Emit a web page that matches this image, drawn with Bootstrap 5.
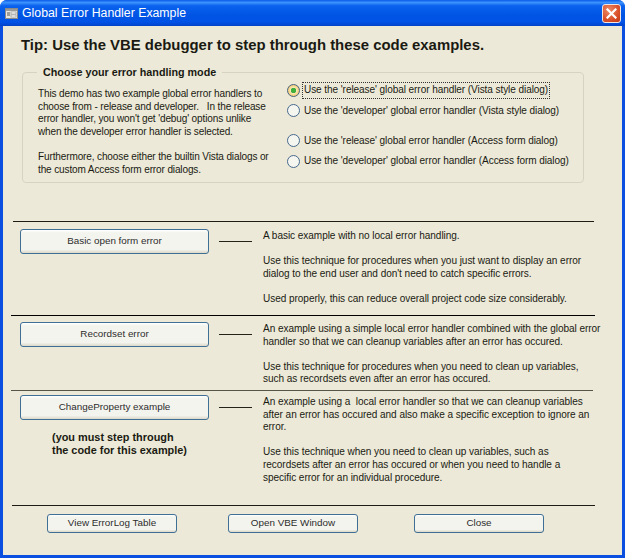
<!DOCTYPE html>
<html lang="en">

<head>
    <meta charset="UTF-8" />
    <title>Global Error Handler Example</title>
    <link rel="stylesheet" href="https://cdn.jsdelivr.net/npm/bootstrap@5.3.0/dist/css/bootstrap.min.css">
    <style>
        html, body { height: 558px; overflow: hidden; background: #fff; }
        body { font-family: "Liberation Sans", Arial, sans-serif; font-size: 10.05px; line-height: 12.6px; color: #1a1a12; }
        .xp-window { width: 625px; height: 558px; border-radius: 7px 7px 0 0; background: #0a4fe0; overflow: hidden; }
        .xp-title { height: 26px; padding: 0 5px; background: linear-gradient(180deg, #0a5ce8 0%, #3d93ff 10%, #0a62ee 22%, #0054e4 60%, #0053e6 85%, #0443c8 100%); color: #fff; font-size: 12.3px; }
        .xp-close { width: 19px; height: 19px; padding: 0; margin-right: -1px; border: 1px solid #f3e6e0; border-radius: 3px; background: radial-gradient(circle at 35% 30%, #ee8a68, #d9502a 60%, #c13a16); }
        .xp-body { height: 529px; margin: 0 3px 3px 3px; background: #ece9d8; padding: 0 0 0 8px; }
        .tip-head { font-size: 14.9px; font-weight: 700; line-height: 20px; padding: 9px 0 0 10px; height: 46px; }
        .mode-box { position: relative; width: 562px; height: 111px; margin-left: 11px; border: 1px solid #d6d3c2; border-radius: 4px; }
        .mode-legend { position: absolute; left: 14px; top: -7px; padding: 0 6px; background: #ece9d8; font-weight: 700; font-size: 10.75px; }
        .mode-text { width: 264px; flex: none; padding: 15px 0 0 15px; white-space: nowrap; letter-spacing: -0.14px; }
        .mode-opts { padding-top: 7px; }
        .opt { height: 20.6px; letter-spacing: -0.08px; }
        .opt-gap { margin-top: 9.5px; }
        .opt input.form-check-input { width: 13px; height: 13px; margin: 0 3px 0 0; flex: none; border: 1px solid #46698c; background-color: #f6f6f0; box-shadow: none; }
        .opt input.form-check-input:checked { background-image: radial-gradient(circle, #3fb03f 0 2.5px, #f8e8b4 3px, #f0b040 100%); background-color: #f0b040; border-color: #46698c; }
        .opt label { padding: 1px; white-space: nowrap; }
        .opt label.has-focus { outline: 1px dotted #333; margin: 0; }
        .ex-row { border-top: 1px solid #1c1c14; }
        .rule-1 { margin: 38px 0 0 2px; width: 581px; height: 94px; padding-top: 7px; }
        .rule-2 { margin-left: 0; width: 584px; height: 75px; padding-top: 6px; border-top-color: #000; }
        .rule-3 { margin-left: 0; width: 582px; height: 115px; padding-top: 4px; border-top-color: #55554a; }
        .rule-4 { margin-left: 1px; width: 583px; padding-top: 8px; }
        .ex-left { width: 189px; flex: none; margin-left: 9px; }
        .rule-1 .ex-left { margin-left: 7px; }
        .xp-btn { display: block; padding: 0 0 1px 0; border: 1px solid #3f6f94; border-radius: 3px; background: linear-gradient(180deg, #fff 0%, #f4f4ef 12%, #f4f4ef 85%, #dcd8c8 100%); color: #2c2c2c; font-size: 9.85px; line-height: 1; }
        .xp-btn:hover { color: #2c2c2c; background: #f4f4ef; border-color: #3f6f94; }
        .btn-main { width: 189px; height: 25px; }
        .btn-foot { width: 130px; height: 19px; }
        .tie-line { width: 33px; height: 1px; background: #23231a; flex: none; margin: 12px 11px 0 10px; }
        .ex-text { padding-top: 1px; letter-spacing: -0.05px; }
        .ex-text p { margin: 0 0 12.6px 0; white-space: nowrap; }
        .step-note { margin: 11px 0 0 32px; font-weight: 700; font-size: 10.9px; }
        .foot-row { margin-left: 35px; }
        .foot-gap-a { margin-left: 51px; }
        .foot-gap-b { margin-left: 56px; }
    </style>
</head>

<body>
    <div class="xp-window">
        <div class="xp-title d-flex align-items-center">
            <svg width="13" height="11" viewBox="0 0 13 11" class="me-1">
                <rect x="0.5" y="0.5" width="12" height="10" fill="#e8e6de" stroke="#8a8a8a" />
                <rect x="1" y="1" width="11" height="2" fill="#9a9a9a" />
                <rect x="2" y="4.5" width="3" height="1" fill="#555" />
                <rect x="2" y="6.5" width="3" height="1" fill="#555" />
                <rect x="6" y="4" width="5" height="2" fill="#fff" stroke="#777" stroke-width="0.5" />
                <rect x="6" y="7" width="5" height="2" fill="#fff" stroke="#777" stroke-width="0.5" />
            </svg>
            <span>Global Error Handler Example</span>
            <button type="button" class="xp-close ms-auto d-flex align-items-center justify-content-center" aria-label="Close">
                <svg width="11" height="11" viewBox="0 0 11 11">
                    <path d="M1.5 1.5 L9.5 9.5 M9.5 1.5 L1.5 9.5" stroke="#fff" stroke-width="2.2" stroke-linecap="square" />
                </svg>
            </button>
        </div>
        <div class="xp-body">
            <div class="tip-head">Tip: Use the VBE debugger to step through these code examples.</div>

            <div class="mode-box d-flex">
                <div class="mode-legend">Choose your error handling mode</div>
                <div class="mode-text">
                    This demo has two example global error handlers to<br>
                    choose from - release and developer. &nbsp; In the release<br>
                    error handler, you won't get 'debug' options unlike<br>
                    when the developer error handler is selected.<br>
                    <br>
                    Furthermore, choose either the builtin Vista dialogs or<br>
                    the custom Access form error dialogs.
                </div>
                <div class="mode-opts">
                    <div class="opt d-flex align-items-center">
                        <input class="form-check-input" type="radio" name="mode" id="m1" checked>
                        <label for="m1" class="has-focus">Use the 'release' global error handler (Vista style dialog)</label>
                    </div>
                    <div class="opt d-flex align-items-center">
                        <input class="form-check-input" type="radio" name="mode" id="m2">
                        <label for="m2">Use the 'developer' global error handler (Vista style dialog)</label>
                    </div>
                    <div class="opt opt-gap d-flex align-items-center">
                        <input class="form-check-input" type="radio" name="mode" id="m3">
                        <label for="m3">Use the 'release' global error handler (Access form dialog)</label>
                    </div>
                    <div class="opt d-flex align-items-center">
                        <input class="form-check-input" type="radio" name="mode" id="m4">
                        <label for="m4">Use the 'developer' global error handler (Access form dialog)</label>
                    </div>
                </div>
            </div>

            <div class="ex-row rule-1 d-flex">
                <div class="ex-left"><button type="button" class="btn xp-btn btn-main">Basic open form error</button></div>
                <div class="tie-line"></div>
                <div class="ex-text">
                    <p>A basic example with no local error handling.</p>
                    <p>Use this technique for procedures when you just want to display an error<br>dialog to the end user and don't need to catch specific errors.</p>
                    <p>Used properly, this can reduce overall project code size considerably.</p>
                </div>
            </div>

            <div class="ex-row rule-2 d-flex">
                <div class="ex-left"><button type="button" class="btn xp-btn btn-main">Recordset error</button></div>
                <div class="tie-line"></div>
                <div class="ex-text">
                    <p>An example using a simple local error handler combined with the global error<br>handler so that we can cleanup variables after an error has occured.</p>
                    <p>Use this technique for procedures when you need to clean up variables,<br>such as recordsets even after an error has occured.</p>
                </div>
            </div>

            <div class="ex-row rule-3 d-flex">
                <div class="ex-left">
                    <button type="button" class="btn xp-btn btn-main">ChangeProperty example</button>
                    <div class="step-note">(you must step through<br>the code for this example)</div>
                </div>
                <div class="tie-line"></div>
                <div class="ex-text">
                    <p>An example using a &nbsp;local error handler so that we can cleanup variables<br>after an error has occured and also make a specific exception to ignore an<br>error.</p>
                    <p>Use this technique when you need to clean up variables, such as<br>recordsets after an error has occured or when you need to handle a<br>specific error for an individual procedure.</p>
                </div>
            </div>

            <div class="ex-row rule-4">
                <div class="foot-row d-flex">
                    <button type="button" class="btn xp-btn btn-foot">View ErrorLog Table</button>
                    <button type="button" class="btn xp-btn btn-foot foot-gap-a">Open VBE Window</button>
                    <button type="button" class="btn xp-btn btn-foot foot-gap-b">Close</button>
                </div>
            </div>
        </div>
    </div>
    <script src="https://cdn.jsdelivr.net/npm/bootstrap@5.3.0/dist/js/bootstrap.bundle.min.js"></script>
</body>

</html>
